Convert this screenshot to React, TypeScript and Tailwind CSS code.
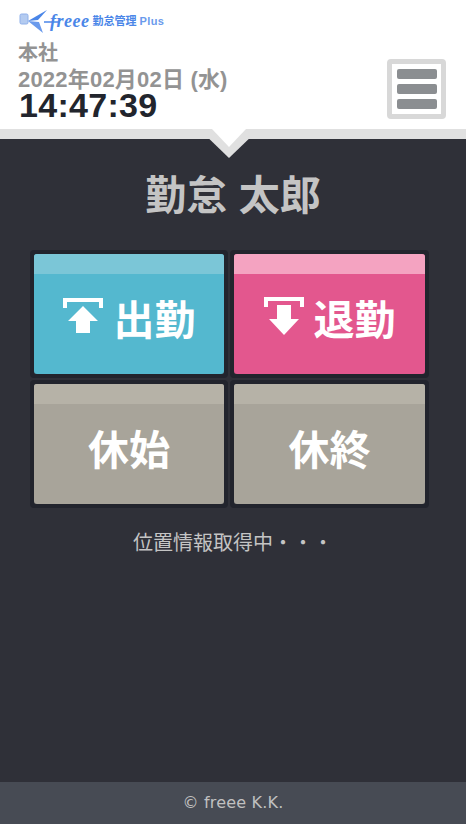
const jp = "font-['Liberation_Sans','Noto_Sans_CJK_JP',sans-serif]";

function Logo() {
  return (
    <div className="flex items-center h-[24px] mt-[9px] ml-[19px]">
      <svg width="42" height="24" viewBox="0 0 42 24">
        <rect x="1" y="5" width="8" height="10" rx="1.5" fill="#b4cbf0" stroke="#8fb0ea" />
        <path d="M9 12 L28 1 L19 11 Z" fill="#4a86e8" />
        <path d="M9 12 L20 13 L24 24 Z" fill="#6a9aec" />
        <path d="M25 13 H41" stroke="#4a86e8" strokeWidth="1.5" />
      </svg>
      <span className="font-['Liberation_Serif',serif] italic font-bold text-[18px] leading-none text-[#4a86e8] -ml-[11px] tracking-[0.5px]">freee</span>
      <span className={`${jp} font-bold text-[11px] leading-none text-[#4a86e8] ml-[3px]`}>勤怠管理</span>
      <span className="font-['Liberation_Sans',sans-serif] font-bold text-[11px] leading-none text-[#6a9aec] ml-[3px] tracking-[0.4px]">Plus</span>
    </div>
  );
}

function PunchButton({ bg, top, children }: { bg: string; top: string; children: React.ReactNode }) {
  return (
    <div className="border-4 border-[#22242d] rounded-[4px] h-[128px]">
      <div className={`relative h-[120px] rounded-[3px] overflow-hidden flex items-center justify-center pt-[15px] ${bg}`}>
        <div className={`absolute top-0 left-0 right-0 h-[20px] ${top}`} />
        {children}
      </div>
    </div>
  );
}

function Label({ children }: { children: React.ReactNode }) {
  return <span className={`${jp} font-bold text-[41px] leading-none text-white`}>{children}</span>;
}

export default function App() {
  return (
    <div className={`w-[466px] h-[824px] flex flex-col bg-[#2f3038] overflow-hidden ${jp}`}>
      <header className="relative shrink-0 h-[139px] bg-white border-b-[10px] border-[#e0e0e0]">
        <Logo />
        <div className="mt-[7px] ml-[18px] text-[20px] leading-[27px] font-bold text-[#939393]">本社</div>
        <div className="ml-[18px] mt-[2px] text-[22px] tracking-[0.2px] leading-[22px] font-bold text-[#939393]">2022年02月02日 (水)</div>
        <div className="ml-[19px] -mt-[1px] text-[34px] tracking-[0.3px] leading-[30px] font-bold text-[#22252d]">14:47:39</div>
        <div className="absolute right-[20px] top-[59px] w-[59px] h-[60px] border-[5px] border-[#d8d8d8] rounded-[4px] flex flex-col items-center justify-center gap-[5px]">
          <div className="w-[40px] h-[10px] rounded-[2px] bg-[#8b8e91]" />
          <div className="w-[40px] h-[10px] rounded-[2px] bg-[#8b8e91]" />
          <div className="w-[40px] h-[10px] rounded-[2px] bg-[#8b8e91]" />
        </div>
        <svg className="absolute left-[199px] top-[129px]" width="60" height="30" viewBox="0 0 60 30">
          <path d="M0 0 L30 29 L60 0 Z" fill="#e0e0e0" />
          <path d="M13 0 L30 18 L47 0 Z" fill="#ffffff" />
        </svg>
      </header>

      <main className="flex-1 flex flex-col items-center">
        <h1 className="mt-[36px] text-[41px] leading-[42px] font-bold text-[#c4c4c4]">勤怠 太郎</h1>
        <div className="mt-[33px] self-start ml-[30px] grid grid-cols-[198px_199px] gap-[2px]">
          <PunchButton bg="bg-[#54b8cf]" top="bg-[#7bc6d7]">
            <svg className="mr-[11px] mb-[13px]" width="40" height="35" viewBox="0 0 40 35" fill="white">
              <path d="M0 0 H40 V10 H36 V4 H4 V10 H0 Z" />
              <path d="M20 8 L35 23 H27 V35 H13 V23 H5 Z" />
            </svg>
            <Label>出勤</Label>
          </PunchButton>
          <PunchButton bg="bg-[#e3578e]" top="bg-[#f4a3c1]">
            <svg className="mr-[10px] mb-[11px]" width="40" height="38" viewBox="0 0 40 38" fill="white">
              <path d="M0 0 H40 V10 H36 V4 H4 V10 H0 Z" />
              <path d="M13 8 H27 V22 H35 L20 38 L5 22 H13 Z" />
            </svg>
            <Label>退勤</Label>
          </PunchButton>
          <PunchButton bg="bg-[#a8a49a]" top="bg-[#b6b2a7]">
            <Label>休始</Label>
          </PunchButton>
          <PunchButton bg="bg-[#a8a49a]" top="bg-[#b6b2a7]">
            <Label>休終</Label>
          </PunchButton>
        </div>
        <p className="mt-[21px] text-[20px] leading-[28px] text-[#c4c4c4]">位置情報取得中・・・</p>
      </main>

      <footer className="shrink-0 h-[42px] bg-[#474b54] flex items-center justify-center font-['DejaVu_Sans',sans-serif] text-[16px] tracking-[0.2px] text-[#c0c0c0]">
        © freee K.K.
      </footer>
    </div>
  );
}
